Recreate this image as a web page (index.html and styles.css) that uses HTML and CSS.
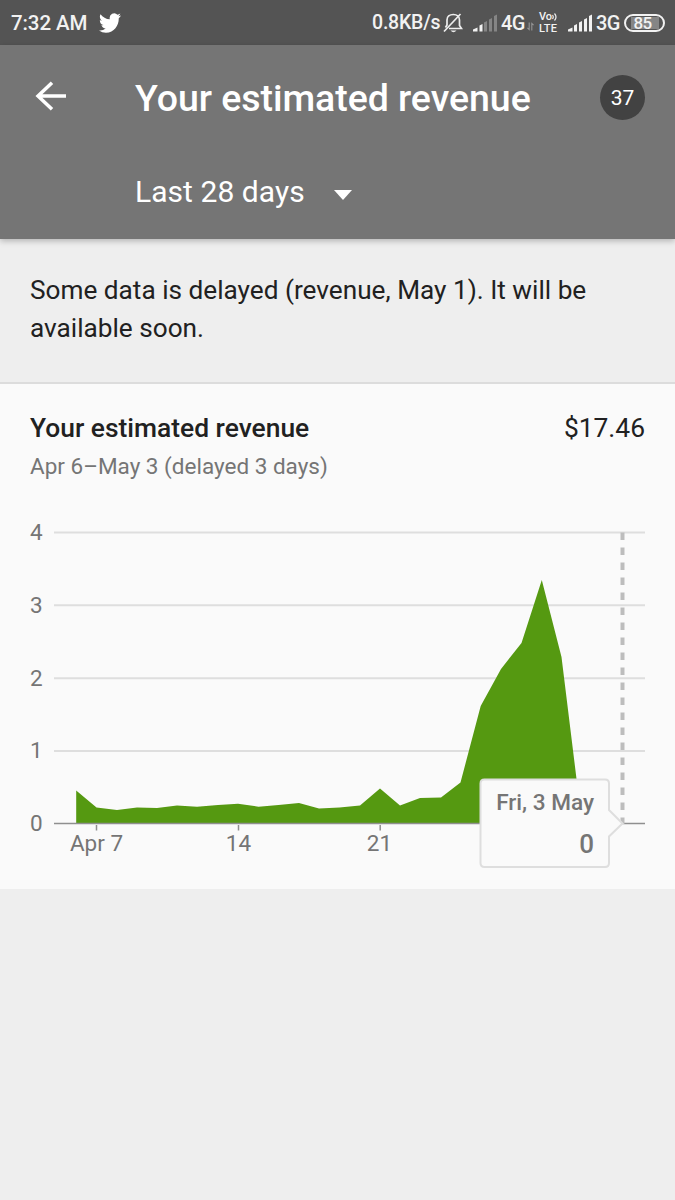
FILE: index.html
```
<!DOCTYPE html>
<html lang="en">

<head>
    <meta charset="UTF-8">
    <meta name="viewport" content="width=device-width, initial-scale=1.0">
    <title>Your estimated revenue</title>
    <link rel="stylesheet" href="styles.css">
</head>

<body>
    <div class="status-bar">
        <span class="time">7:32 AM</span>
        <svg class="twitter" width="22" height="20" viewBox="0 2 24 20" preserveAspectRatio="none">
            <path fill="#fff" d="M23.95 4.57a10 10 0 0 1-2.82.77 4.96 4.96 0 0 0 2.16-2.72c-.95.55-2 .95-3.13 1.18a4.92 4.92 0 0 0-8.38 4.48C7.69 8.1 4.07 6.13 1.64 3.16a4.82 4.82 0 0 0-.67 2.48c0 1.71.87 3.21 2.19 4.1a4.9 4.9 0 0 1-2.23-.62v.06a4.92 4.92 0 0 0 3.95 4.83 5 5 0 0 1-2.21.08 4.94 4.94 0 0 0 4.6 3.42A9.87 9.87 0 0 1 0 19.54a13.99 13.99 0 0 0 7.56 2.21c9.05 0 14-7.5 14-13.98 0-.21 0-.42-.02-.63a9.94 9.94 0 0 0 2.46-2.55z" />
        </svg>
        <span class="speed">0.8KB/s</span>
        <svg class="bell" width="20" height="22" viewBox="0 0 20 22" fill="none" stroke="#eee" stroke-width="1.7">
            <path d="M6 16.500H18.500L16.500 13.500V8C16.500 4.500 14 2.500 10.300 2.500C6.500 2.500 4 4.500 4 8V13L2.500 15.500" />
            <path d="M17.500 2L1 19.500" />
            <path d="M7.500 18.500H13.500Q10.500 22 7.500 18.500Z" fill="#eee" stroke="none" />
        </svg>
        <svg class="signal" width="24" height="18" viewBox="0 0 24 18">
            <path fill="#f2f2f2" d="M0 17.500V15.500L4.500 13.500V17.500ZM6.500 17.500V11.500L9.500 10V17.500Z" />
            <path fill="#858585" d="M11 17.500V8.500L14 7V17.500ZM16 17.500V5.500L19 4V17.500ZM21 17.500V2L24 .5V17.500Z" />
        </svg>
        <span class="net">4G</span>
        <svg class="updown" width="7" height="9" viewBox="0 0 8 9" fill="none" stroke="#999" stroke-width="1.200">
            <path d="M2.500 0V8L.5 6M5.500 9V1L7.500 3" />
        </svg>
        <div class="volte">
            <div class="vo">Vo<svg width="5" height="8" viewBox="0 0 5 8" fill="none" stroke="#eee" stroke-width="1.200">
                    <path d="M.5 2Q2 4 .5 6M2.500 .5Q5.500 4 2.500 7.500" />
                </svg></div>
            <div class="lte">LTE</div>
        </div>
        <svg class="signal signal-full" width="24" height="18" viewBox="0 0 24 18">
            <path fill="#f2f2f2" d="M0 17.500V15.500L4.500 13.500V17.500ZM6 17.500V11.500L9 10V17.500ZM11 17.500V8.500L14 7V17.500ZM16 17.500V5.500L19 4V17.500ZM21 17.500V2L24 .5V17.500Z" />
        </svg>
        <span class="net">3G</span>
        <div class="battery"><span>85</span></div>
    </div>

    <header class="app-bar">
        <div class="app-bar-row">
            <svg class="back" width="32" height="30" viewBox="0 0 32 30" fill="none" stroke="#fff" stroke-width="3.500">
                <path d="M17 1.700L3 15L17 28.300M3 15H31" />
            </svg>
            <h1 class="title">Your estimated revenue</h1>
            <div class="avatar">37</div>
        </div>
        <div class="period">
            <span class="period-text">Last 28 days</span>
            <span class="caret"></span>
        </div>
    </header>

    <div class="notice">Some data is delayed (revenue, May 1). It will be available soon.</div>

    <section class="card">
        <div class="card-head">
            <h2 class="card-title">Your estimated revenue</h2>
            <span class="amount">$17.46</span>
        </div>
        <div class="range">Apr 6–May 3 (delayed 3 days)</div>
        <svg class="chart" width="675" height="389" viewBox="0 500 675 389">
            <!-- grid lines -->
            <path class="grid" d="M54 532.500H645M54 605.200H645M54 678.200H645M54 751H645" />
            <g class="y-labels">
                <text x="30" y="540">4</text>
                <text x="30" y="612.500">3</text>
                <text x="30" y="685.500">2</text>
                <text x="30" y="758">1</text>
                <text x="30" y="830.500">0</text>
            </g>
            <!-- revenue per day -->
            <path class="area" d="M76.200 823.500V790.500L96.500 807.500L117 810L137 807.500L157 808L177 805.500L197 806.700L218 805L238 803.700L258.500 806.700L278.500 805L299 803L319 808.500L339.500 807.500L360 805.500L380 788.500L400 805.500L420 798L441 797.500L460.500 782.500L480.700 706L501 669L521.500 643L541.800 580L561.500 657L582 823.500Z" />
            <path class="axis" d="M54 823.500H645" />
            <path class="axis" d="M96.500 825V830.500M238.500 825V830.500M380.200 825V830.500" />
            <g class="x-labels">
                <text x="96.500" y="851">Apr 7</text>
                <text x="238.500" y="851">14</text>
                <text x="379.500" y="851">21</text>
            </g>
            <!-- selected day -->
            <path class="marker" d="M622.500 532.500V824" />
            <path class="tip" d="M484.500 779.500H605Q609 779.500 609 783.500V810L622.500 823.500L609 836.500V863Q609 867 605 867H484.500Q480.500 867 480.500 863V783.500Q480.500 779.500 484.500 779.500Z" />
            <g class="tip-text">
                <text x="594" y="809.500">Fri, 3 May</text>
                <text class="tip-value" x="594" y="852.500">0</text>
            </g>
        </svg>
    </section>
</body>

</html>
```
FILE: styles.css
```
* {
    margin: 0;
    padding: 0;
    box-sizing: border-box;
}

body {
    width: 675px;
    height: 1200px;
    overflow: hidden;
    background-color: #eee;
    font-family: Roboto, "Liberation Sans", sans-serif;
    color: #212121;
}

.status-bar {
    display: flex;
    align-items: center;
    height: 45px;
    padding: 0 10px 0 11px;
    background-color: #545454;
    color: #f2f2f2;
    font-size: 20px;
    font-weight: 500;
    white-space: nowrap;
}

.status-bar svg {
    flex: none;
}

.time {
    width: 76px;
    font-size: 20.5px;
    letter-spacing: -0.1px;
}

.twitter {
    margin-left: 12px;
}

.speed {
    margin-left: auto;
    width: 68px;
    font-size: 19.5px;
    letter-spacing: -0.2px;
}

.bell {
    margin-left: 3px;
}

.signal {
    margin: 0 4px 0 10px;
}

.signal-full {
    margin-left: 9px;
}

.net {
    width: 23px;
    letter-spacing: -0.5px;
}

.updown {
    margin: 8px 0 0 3px;
}

.volte {
    width: 20px;
    margin-left: 5px;
}

.vo {
    display: flex;
    align-items: center;
    height: 8px;
    margin-bottom: 3px;
    font-size: 11px;
    line-height: 8px;
}

.lte {
    height: 9px;
    font-size: 11px;
    line-height: 9px;
    letter-spacing: 0.2px;
}

.battery {
    display: flex;
    align-items: center;
    justify-content: center;
    width: 41px;
    height: 18px;
    margin-left: 5px;
    border: 2px solid #f2f2f2;
    border-radius: 9px;
    font-size: 17px;
}

.battery span {
    width: 28px;
    height: 12px;
    padding-right: 4px;
    line-height: 13px;
    letter-spacing: -0.6px;
    text-align: center;
    background-color: #858585;
}

.app-bar {
    position: relative;
    height: 194px;
    background-color: #757575;
    color: #fff;
    box-shadow: 0 2px 6px rgba(0, 0, 0, 0.25);
}

.app-bar-row {
    display: flex;
    align-items: center;
    height: 105px;
    padding: 0 30px 0 35px;
}

.back {
    margin-bottom: 3px;
}

.title {
    margin-left: 68px;
    padding-top: 1px;
    font-size: 37.5px;
    font-weight: 500;
    letter-spacing: -0.05px;
    white-space: nowrap;
}

.avatar {
    width: 45px;
    height: 45px;
    margin: 0 0 1px auto;
    border-radius: 50%;
    background-color: #424242;
    font-size: 21px;
    line-height: 46px;
    text-align: center;
}

.period {
    display: flex;
    align-items: center;
    height: 84px;
    padding: 0 0 2px 135px;
    font-size: 30px;
    letter-spacing: 0.05px;
}

.caret {
    margin: 8px 0 0 29px;
    border: 9px solid transparent;
    border-top: 10px solid #fff;
    border-bottom: 0;
}

.notice {
    height: 145px;
    padding: 32px 30px 0;
    border-bottom: 2px solid #dcdcdc;
    font-size: 26.2px;
    line-height: 38px;
}

.card {
    height: 505px;
    background-color: #fafafa;
}

.card-head {
    display: flex;
    justify-content: space-between;
    padding: 28px 30px 0;
    line-height: 32px;
}

.card-title {
    font-size: 26.4px;
    font-weight: 500;
}

.amount {
    font-size: 26.4px;
}

.range {
    height: 56px;
    padding: 8px 30px 0;
    color: #757575;
    font-size: 22.5px;
    line-height: 28px;
}

.chart {
    display: block;
}

.grid {
    stroke: #dedede;
    stroke-width: 2;
}

.y-labels,
.x-labels {
    fill: #757575;
    font-size: 22.5px;
}

.x-labels {
    text-anchor: middle;
}

.area {
    fill: #559911;
}

.axis {
    fill: none;
    stroke: #8f8f8f;
    stroke-width: 1.5;
}

.marker {
    stroke: #bdbdbd;
    stroke-width: 4;
    stroke-dasharray: 7.5 7.5;
}

.tip {
    fill: #fafafa;
    stroke: #dedede;
    stroke-width: 2;
}

.tip-text {
    fill: #757575;
    font-size: 22.6px;
    font-weight: 500;
    text-anchor: end;
}

.tip-value {
    font-size: 26px;
}
```
